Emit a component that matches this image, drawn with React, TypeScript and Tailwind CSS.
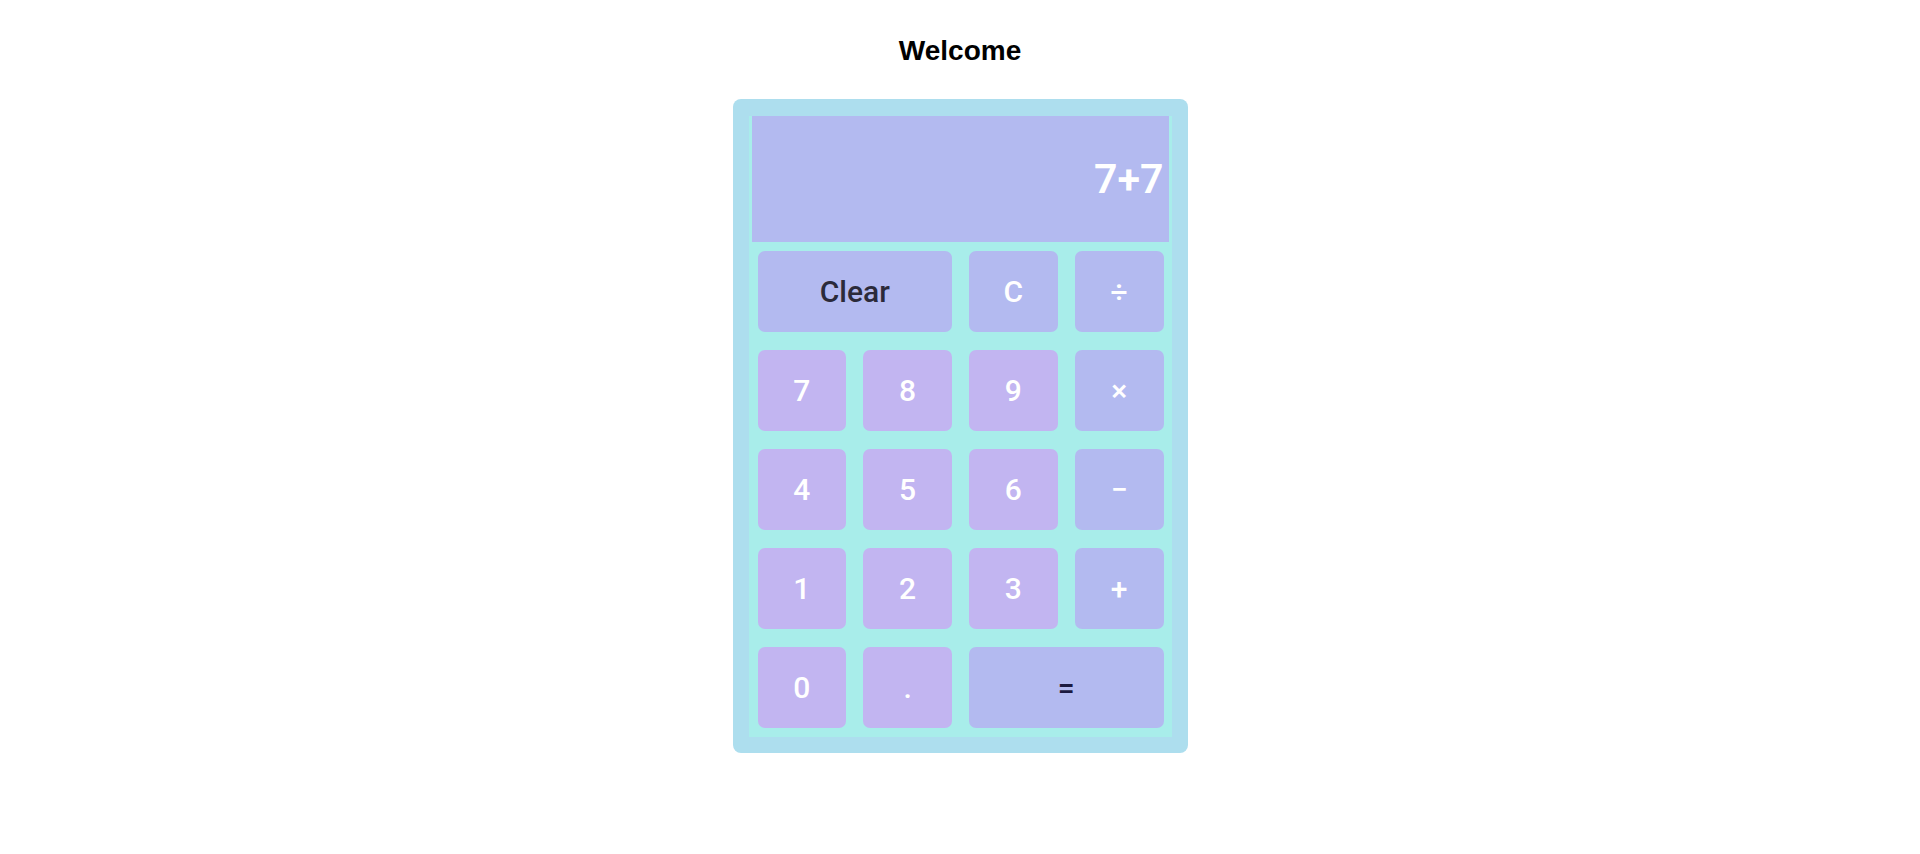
import React from "react";

type Btn = { label: string; kind: "op" | "num"; span?: number; text?: string };

const rows: Btn[][] = [
  [
    { label: "Clear", kind: "op", span: 2, text: "text-[#2b2a3a]" },
    { label: "C", kind: "op" },
    { label: "÷", kind: "op" },
  ],
  [
    { label: "7", kind: "num" },
    { label: "8", kind: "num" },
    { label: "9", kind: "num" },
    { label: "×", kind: "op" },
  ],
  [
    { label: "4", kind: "num" },
    { label: "5", kind: "num" },
    { label: "6", kind: "num" },
    { label: "−", kind: "op" },
  ],
  [
    { label: "1", kind: "num" },
    { label: "2", kind: "num" },
    { label: "3", kind: "num" },
    { label: "+", kind: "op" },
  ],
  [
    { label: "0", kind: "num" },
    { label: ".", kind: "num" },
    { label: "=", kind: "op", span: 2, text: "text-[#1c1a40]" },
  ],
];

export default function App() {
  return (
    <div
      className="min-h-[854px] w-full bg-white flex flex-col items-center pt-[35px]"
      style={{ fontFamily: "Roboto, 'Liberation Sans', sans-serif" }}
    >
      <h1
        className="text-[28px] leading-[31px] font-bold text-black"
        style={{ fontFamily: "'Liberation Sans', Arial, sans-serif" }}
      >
        Welcome
      </h1>
      <div className="mt-[33px] w-[455px] rounded-lg bg-[#addeee] p-4">
        <div className="bg-[#a8edea] pb-[9px]">
          <div className="mx-[3px] mt-[1px] h-[126px] bg-[#b3baf0] flex items-center justify-end pr-[5px]">
            <span className="text-[41px] font-semibold text-white leading-none">7+7</span>
          </div>
          <div className="mt-[9px] ml-[9px] mr-[8px] grid grid-cols-4 gap-x-[17px] gap-y-[18px]">
            {rows.flat().map((b, i) => (
              <button
                key={i}
                className={
                  "h-[81px] rounded-[7px] flex items-center justify-center text-[30px] font-medium " +
                  (b.span === 2 ? "col-span-2 " : "") +
                  (b.kind === "num" ? "bg-[#c2b5f1] " : "bg-[#b3baf0] ") +
                  (b.text ? b.text : "text-white")
                }
              >
                {b.label}
              </button>
            ))}
          </div>
        </div>
      </div>
    </div>
  );
}
